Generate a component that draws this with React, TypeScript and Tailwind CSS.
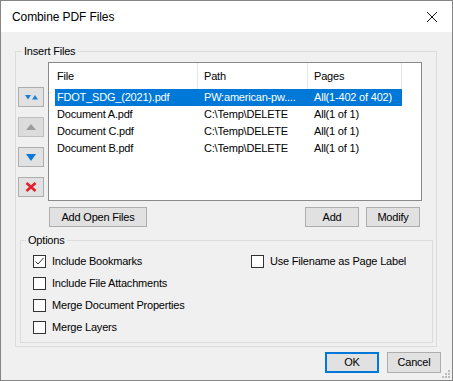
const files = [
  { name: "FDOT_SDG_(2021).pdf", path: "PW:american-pw....", pages: "All(1-402 of 402)", selected: true },
  { name: "Document A.pdf", path: "C:\\Temp\\DELETE", pages: "All(1 of 1)" },
  { name: "Document C.pdf", path: "C:\\Temp\\DELETE", pages: "All(1 of 1)" },
  { name: "Document B.pdf", path: "C:\\Temp\\DELETE", pages: "All(1 of 1)" },
]

function Check({ label, checked }: { label: string; checked?: boolean }) {
  return (
    <div className="flex h-[22px] items-center">
      <span className="flex h-[13px] w-[13px] items-center justify-center border border-[#333333] bg-white">
        {checked && (
          <svg width="11" height="11" viewBox="0 0 11 11">
            <path d="M1.5 5.5 L4 8 L9.5 2" fill="none" stroke="#333333" strokeWidth="1" />
          </svg>
        )}
      </span>
      <span className="ml-[6px]">{label}</span>
    </div>
  )
}

function SideButton({ children, disabled }: { children: React.ReactNode; disabled?: boolean }) {
  return (
    <button
      type="button"
      className={`flex h-[20px] w-[26px] items-center justify-center border ${
        disabled ? "border-[#bfbfbf] bg-[#dcdcdc]" : "border-[#adadad] bg-[#e1e1e1]"
      }`}
    >
      {children}
    </button>
  )
}

export default function App() {
  return (
    <div className="relative h-[381px] w-[453px] border border-[#858585] bg-[#f0f0f0] font-['Liberation_Sans',Arial,sans-serif] text-[11px] tracking-[-0.2px] text-black">
      {/* title bar */}
      <div className="flex h-[31px] items-center justify-between bg-white pl-[11px] pr-[10px]">
        <span className="text-[12px] tracking-[-0.1px]">Combine PDF Files</span>
        <svg width="12" height="12" viewBox="0 0 12 12" className="mr-[4px]">
          <path d="M1 1 L11 11 M11 1 L1 11" stroke="#111" strokeWidth="1" />
        </svg>
      </div>

      <fieldset className="ml-[14px] mt-[12px] h-[303px] w-[422px] border border-[#dcdcdc]">
        <legend className="ml-[6px] px-[2px] leading-[14px]">Insert Files</legend>

        <div className="mt-[4px] flex pl-[2px]">
          <div className="flex w-[26px] flex-col gap-[10px] pt-[25px]">
            <SideButton>
              <svg width="13" height="5" viewBox="0 0 13 5">
                <path d="M0 0 H6 L3 4.5 Z" fill="#1a7fd6" />
                <path d="M7 4.5 H13 L10 0 Z" fill="#1a7fd6" />
              </svg>
            </SideButton>
            <SideButton disabled>
              <svg width="10" height="6" viewBox="0 0 10 6">
                <path d="M0 6 H10 L5 0 Z" fill="#9c9c9c" />
              </svg>
            </SideButton>
            <SideButton>
              <svg width="10" height="7" viewBox="0 0 10 7">
                <path d="M0 0 H10 L5 7 Z" fill="#0a78d6" />
              </svg>
            </SideButton>
            <SideButton>
              <svg width="12" height="10" viewBox="0 0 12 10">
                <path d="M1.5 1 L10.5 9 M10.5 1 L1.5 9" stroke="#e3202e" strokeWidth="2.6" />
              </svg>
            </SideButton>
          </div>

          <div className="ml-[4px] h-[139px] w-[374px] border border-[#8a8a8a] bg-white">
            <div className="flex h-[26px] items-center">
              <div className="flex h-full w-[149px] items-center border-r border-[#e5e5e5] pl-[8px]">File</div>
              <div className="flex h-full w-[110px] items-center border-r border-[#e5e5e5] pl-[6px]">Path</div>
              <div className="flex h-full w-[94px] items-center border-r border-[#e5e5e5] pl-[6px]">Pages</div>
            </div>
            {files.map((f) => (
              <div
                key={f.name}
                className={`ml-[6px] flex h-[17px] w-[347px] items-center whitespace-nowrap ${
                  f.selected ? "bg-[#0078d7] text-white" : ""
                }`}
              >
                <div className="w-[143px] pl-[2px]">{f.name}</div>
                <div className="w-[110px] pl-[6px]">{f.path}</div>
                <div className="w-[94px] pl-[6px]">{f.pages}</div>
              </div>
            ))}
          </div>
        </div>

        <div className="mt-[6px] flex">
          <button type="button" className="ml-[33px] h-[20px] w-[98px] border border-[#adadad] bg-[#e1e1e1]">
            Add Open Files
          </button>
          <button type="button" className="ml-[158px] h-[20px] w-[54px] border border-[#adadad] bg-[#e1e1e1]">
            Add
          </button>
          <button type="button" className="ml-[7px] h-[20px] w-[54px] border border-[#adadad] bg-[#e1e1e1]">
            Modify
          </button>
        </div>

        <fieldset className="ml-[4px] mt-[6px] h-[110px] w-[413px] border border-[#dcdcdc]">
          <legend className="ml-[5px] px-[2px] leading-[14px]">Options</legend>
          <div className="mt-[3px] flex pl-[12px]">
            <div className="w-[218px]">
              <Check label="Include Bookmarks" checked />
              <Check label="Include File Attachments" />
              <Check label="Merge Document Properties" />
              <Check label="Merge Layers" />
            </div>
            <div>
              <Check label="Use Filename as Page Label" />
            </div>
          </div>
        </fieldset>
      </fieldset>

      <div className="mt-[5px] flex justify-end gap-[8px] pr-[11px]">
        <button type="button" className="h-[21px] w-[54px] border-2 border-[#0078d7] bg-[#e1e1e1]">
          OK
        </button>
        <button type="button" className="h-[21px] w-[54px] border border-[#adadad] bg-[#e1e1e1]">
          Cancel
        </button>
      </div>

      {/* size grip */}
      <svg width="10" height="10" viewBox="0 0 10 10" className="absolute bottom-[1px] right-[1px]">
        <rect x="7" y="1" width="2" height="2" fill="#bdbdbd" />
        <rect x="4" y="4" width="2" height="2" fill="#bdbdbd" />
        <rect x="7" y="4" width="2" height="2" fill="#bdbdbd" />
        <rect x="1" y="7" width="2" height="2" fill="#bdbdbd" />
        <rect x="4" y="7" width="2" height="2" fill="#bdbdbd" />
        <rect x="7" y="7" width="2" height="2" fill="#bdbdbd" />
      </svg>
    </div>
  )
}
